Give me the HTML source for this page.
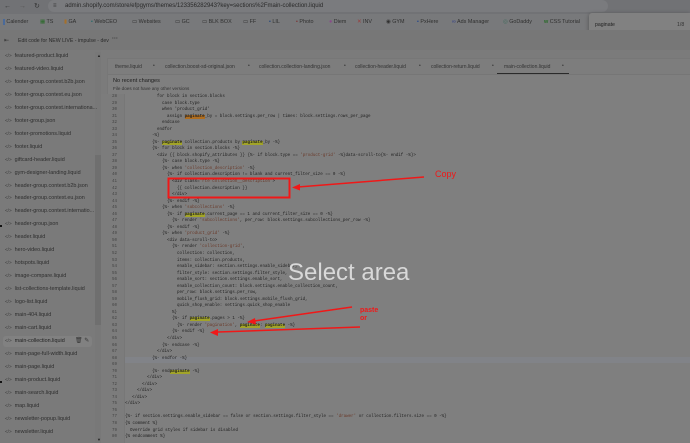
<!DOCTYPE html>
<html><head><meta charset="utf-8"><style>
*{margin:0;padding:0;box-sizing:border-box}
body{width:690px;height:443px;overflow:hidden;background:#7e7e7e;font-family:"Liberation Sans",sans-serif;position:relative;color:#2e2e2e}
.a{position:absolute;white-space:nowrap}
#url{left:0;top:0;width:690px;height:14px;background:#717275}
#bm{left:0;top:14px;width:690px;height:16px;background:#78797b}
#hdr{left:0;top:30px;width:690px;height:20px;background:#777777}
#side{left:0;top:50px;width:101px;height:393px;background:#7a7a7a}
#main{left:101px;top:50px;width:589px;height:393px;background:#7b7b7b}
#panel{left:107px;top:58px;width:583px;height:385px;background:#7f7f7f;border-left:1px solid #777;border-top:1px solid #777}
#tabs{left:108px;top:59px;width:582px;height:16px;background:#7d7d7d;border-bottom:1px solid #767676}
.t{font-size:5px;color:#333;top:64px}
.d{font-size:5px;color:#333;top:63px}
.f{font-size:5.4px;color:#2e2e2e;left:5px}
.f b{font-weight:normal;color:#3a3a3a;margin-right:3px;font-size:4.6px}
#gut{left:101px;top:94px;width:24px;height:349px;background:#7c7c7c;border-right:1px solid #777}
.ln{position:absolute;left:101px;width:16px;text-align:right;font:4.17px "Liberation Mono",monospace;color:#444;height:6.54px;line-height:6.54px}
.cl{position:absolute;font:4.2px "Liberation Mono",monospace;color:#222;white-space:pre;height:6.54px;line-height:6.54px}
.s{color:#6a3a2a}
.h{background:#a2a428;color:#222;font-weight:bold}
.ho{background:#b06e20;color:#222;font-weight:bold}
.bmi{font-size:5.4px;color:#2f2f2f;top:19px}
</style></head><body>
<div class="a" id="url"></div>
<div class="a" style="left:4px;top:3px;font-size:7px;color:#333">&#8592;</div>
<div class="a" style="left:19px;top:3px;font-size:7px;color:#555">&#8594;</div>
<div class="a" style="left:34px;top:2px;font-size:7px;color:#333">&#8635;</div>
<div class="a" style="left:48px;top:0;width:560px;height:12px;border-radius:6px;background:#7a7b7e"></div>
<div class="a" style="left:53px;top:3px;font-size:6px;color:#333">&#8801;</div>
<div class="a" style="left:65px;top:3px;font-size:6px;color:#2a2a2a">admin.shopify.com/store/efpgyms/themes/123356282943?key=sections%2Fmain-collection.liquid</div>
<div class="a" id="bm"></div>
<div class="a bmi" style="left:3px"><span style="background:#4a6a9a;color:#4a6a9a">▪</span> Calender</div>
<div class="a bmi" style="left:40px"><span style="color:#2a6a2a">▦</span> TS</div>
<div class="a bmi" style="left:64px"><span style="color:#a6702a">▮</span> GA</div>
<div class="a bmi" style="left:91px"><span style="color:#2a6a6a">▪</span> WebCEO</div>
<div class="a bmi" style="left:132px">▭ Websites</div>
<div class="a bmi" style="left:175px">▭ GC</div>
<div class="a bmi" style="left:202px">▭ BLK BOX</div>
<div class="a bmi" style="left:243px">▭ FF</div>
<div class="a bmi" style="left:269px"><span style="color:#2a4a7a">▪</span> LIL</div>
<div class="a bmi" style="left:296px"><span style="color:#7a3a3a">▪</span> Photo</div>
<div class="a bmi" style="left:329px"><span style="color:#8a4a8a">●</span> Diem</div>
<div class="a bmi" style="left:357px"><span style="color:#9a3a3a">✕</span> INV</div>
<div class="a bmi" style="left:386px">◉ GYM</div>
<div class="a bmi" style="left:417px"><span style="color:#2a4a8a">▪</span> PxHere</div>
<div class="a bmi" style="left:452px"><span style="color:#2a3a8a">∞</span> Ads Manager</div>
<div class="a bmi" style="left:503px"><span style="color:#3a6a5a">◎</span> GoDaddy</div>
<div class="a bmi" style="left:544px"><span style="color:#2a6a2a;font-weight:bold">w</span> CSS Tutorial</div>
<div class="a" style="left:589px;top:13px;width:101px;height:25px;background:#818181;border-radius:3px 0 0 3px;box-shadow:0 1px 4px rgba(0,0,0,.35)"></div>
<div class="a" style="left:595px;top:22px;font-size:5.2px;color:#222">paginate</div>
<div class="a" style="left:677px;top:22px;font-size:5.2px;color:#333">1/8</div>
<div class="a" id="hdr"></div>
<div class="a" style="left:4px;top:37px;font-size:6px;color:#333">⇤</div>
<div class="a" style="left:18px;top:38px;font-size:5.2px;color:#2a2a2a">Edit code for NEW LIVE - impulse - dev</div>
<div class="a" style="left:112px;top:36px;font-size:6px;color:#333;font-weight:bold">···</div>
<div class="a" id="side"></div>
<div class="a" style="left:95px;top:52px;width:6px;height:391px;background:#787878"></div>
<div class="a" style="left:95px;top:155px;width:6px;height:170px;background:#6f6f6f"></div>
<div class="a" style="left:97px;top:53px;font-size:4px;color:#222">▲</div>
<div class="a" style="left:97px;top:437px;font-size:4px;color:#222">▼</div>
<div class="a" style="left:3px;top:336px;width:89px;height:11px;background:#818181;border-radius:3px"></div>
<div class="a" style="left:75px;top:337px;font-size:6px;color:#333">🗑 ✎</div>
<div class="a" style="left:0;top:225px;width:2px;height:2px;background:#111"></div>
<div class="a" style="left:0;top:381px;width:2px;height:2px;background:#111"></div>
<div class="a f" style="top:53px"><b>&lt;/&gt;</b>featured-product.liquid</div>
<div class="a f" style="top:66px"><b>&lt;/&gt;</b>featured-video.liquid</div>
<div class="a f" style="top:79px"><b>&lt;/&gt;</b>footer-group.context.b2b.json</div>
<div class="a f" style="top:92px"><b>&lt;/&gt;</b>footer-group.context.eu.json</div>
<div class="a f" style="top:105px"><b>&lt;/&gt;</b>footer-group.context.internationa...</div>
<div class="a f" style="top:118px"><b>&lt;/&gt;</b>footer-group.json</div>
<div class="a f" style="top:131px"><b>&lt;/&gt;</b>footer-promotions.liquid</div>
<div class="a f" style="top:144px"><b>&lt;/&gt;</b>footer.liquid</div>
<div class="a f" style="top:157px"><b>&lt;/&gt;</b>giftcard-header.liquid</div>
<div class="a f" style="top:170px"><b>&lt;/&gt;</b>gym-designer-landing.liquid</div>
<div class="a f" style="top:183px"><b>&lt;/&gt;</b>header-group.context.b2b.json</div>
<div class="a f" style="top:195px"><b>&lt;/&gt;</b>header-group.context.eu.json</div>
<div class="a f" style="top:208px"><b>&lt;/&gt;</b>header-group.context.internatio...</div>
<div class="a f" style="top:221px"><b>&lt;/&gt;</b>header-group.json</div>
<div class="a f" style="top:234px"><b>&lt;/&gt;</b>header.liquid</div>
<div class="a f" style="top:247px"><b>&lt;/&gt;</b>hero-video.liquid</div>
<div class="a f" style="top:260px"><b>&lt;/&gt;</b>hotspots.liquid</div>
<div class="a f" style="top:273px"><b>&lt;/&gt;</b>image-compare.liquid</div>
<div class="a f" style="top:286px"><b>&lt;/&gt;</b>list-collections-template.liquid</div>
<div class="a f" style="top:299px"><b>&lt;/&gt;</b>logo-list.liquid</div>
<div class="a f" style="top:312px"><b>&lt;/&gt;</b>main-404.liquid</div>
<div class="a f" style="top:325px"><b>&lt;/&gt;</b>main-cart.liquid</div>
<div class="a f" style="top:338px;color:#222"><b>&lt;/&gt;</b>main-collection.liquid</div>
<div class="a f" style="top:351px"><b>&lt;/&gt;</b>main-page-full-width.liquid</div>
<div class="a f" style="top:364px"><b>&lt;/&gt;</b>main-page.liquid</div>
<div class="a f" style="top:377px"><b>&lt;/&gt;</b>main-product.liquid</div>
<div class="a f" style="top:390px"><b>&lt;/&gt;</b>main-search.liquid</div>
<div class="a f" style="top:403px"><b>&lt;/&gt;</b>map.liquid</div>
<div class="a f" style="top:416px"><b>&lt;/&gt;</b>newsletter-popup.liquid</div>
<div class="a f" style="top:429px"><b>&lt;/&gt;</b>newsletter.liquid</div>
<div class="a" id="main"></div>
<div class="a" id="panel"></div>
<div class="a" id="tabs"></div>
<div class="a t" style="left:115px">theme.liquid</div><div class="a d" style="left:153px">•</div>
<div class="a t" style="left:165px">collection.boost-sd-original.json</div><div class="a d" style="left:248px">•</div>
<div class="a t" style="left:259px">collection.collection-landing.json</div><div class="a d" style="left:344px">•</div>
<div class="a t" style="left:355px">collection-header.liquid</div><div class="a d" style="left:419px">•</div>
<div class="a t" style="left:431px">collection-return.liquid</div><div class="a d" style="left:492px">•</div>
<div class="a t" style="left:504px">main-collection.liquid</div><div class="a d" style="left:562px">•</div>
<div class="a" style="left:497px;top:73px;width:72px;height:1px;background:#2a2a2a"></div>
<div class="a" style="left:113px;top:78px;font-size:5.6px;color:#1e1e1e">No recent changes</div>
<div class="a" style="left:113px;top:86px;font-size:4.6px;color:#333">File does not have any other versions</div>
<div class="a" id="gut"></div>
<div class="a" style="left:125px;top:356.5px;width:565px;height:6.54px;background:#818388"></div>
<div id="code"></div>
<script>
var L=[
[28,157,'for block in section.blocks'],
[29,162,'case block.type'],
[30,162,"when 'product_grid'"],
[31,167,'assign <span class="ho">paginate</span>_by = block.settings.per_row | times: block.settings.rows_per_page'],
[32,162,'endcase'],
[33,157,'endfor'],
[34,152,'-%}'],
[35,152,'{%- <span class="h">paginate</span> collection.products by <span class="h">paginate</span>_by -%}'],
[36,152,'{%- for block in section.blocks -%}'],
[37,157,'&lt;div {{ block.shopify_attributes }} {%- if block.type == <span class="s">\'product-grid\'</span> -%}data-scroll-to{%- endif -%}&gt;'],
[38,162,'{%- case block.type -%}'],
[39,162,'{%- when <span class="s">\'collection_description\'</span> -%}'],
[40,167,'{%- if collection.description != blank and current_filter_size == 0 -%}'],
[41,172,'&lt;div class=<span class="s">"rte collection__description"</span>&gt;'],
[42,177,'{{ collection.description }}'],
[43,172,'&lt;/div&gt;'],
[44,167,'{%- endif -%}'],
[45,162,'{%- when <span class="s">\'subcollections\'</span> -%}'],
[46,167,'{%- if <span class="h">paginate</span>.current_page == 1 and current_filter_size == 0 -%}'],
[47,172,'{%- render <span class="s">\'subcollections\'</span>, per_row: block.settings.subcollections_per_row -%}'],
[48,167,'{%- endif -%}'],
[49,162,'{%- when <span class="s">\'product_grid\'</span> -%}'],
[50,167,'&lt;div data-scroll-to&gt;'],
[51,172,'{%- render <span class="s">\'collection-grid\'</span>,'],
[52,177,'collection: collection,'],
[53,177,'items: collection.products,'],
[54,177,'enable_sidebar: section.settings.enable_sidebar,'],
[55,177,'filter_style: section.settings.filter_style,'],
[56,177,'enable_sort: section.settings.enable_sort,'],
[57,177,'enable_collection_count: block.settings.enable_collection_count,'],
[58,177,'per_row: block.settings.per_row,'],
[59,177,'mobile_flush_grid: block.settings.mobile_flush_grid,'],
[60,177,'quick_shop_enable: settings.quick_shop_enable'],
[61,172,'%}'],
[62,172,'{%- if <span class="h">paginate</span>.pages &gt; 1 -%}'],
[63,177,'{%- render <span class="s">\'pagination\'</span>, <span class="h">paginate</span>: <span class="h">paginate</span> -%}'],
[64,172,'{%- endif -%}'],
[65,167,'&lt;/div&gt;'],
[66,162,'{%- endcase -%}'],
[67,157,'&lt;/div&gt;'],
[68,152,'{%- endfor -%}'],
[69,152,''],
[70,152,'{%- end<span class="h">paginate</span> -%}'],
[71,147,'&lt;/div&gt;'],
[72,142,'&lt;/div&gt;'],
[73,137,'&lt;/div&gt;'],
[74,132,'&lt;/div&gt;'],
[75,125,'&lt;/div&gt;'],
[76,125,''],
[77,125,'{%- if section.settings.enable_sidebar == false or section.settings.filter_style == <span class="s">\'drawer\'</span> or collection.filters.size == 0 -%}'],
[78,125,'{% comment %}'],
[79,130,'Override grid styles if sidebar is disabled'],
[80,125,'{% endcomment %}']];
var h='';
for(var i=0;i<L.length;i++){var y=94+i*6.54;
h+='<div class="ln" style="top:'+y+'px">'+L[i][0]+'</div><div class="cl" style="left:'+L[i][1]+'px;top:'+y+'px">'+L[i][2]+'</div>';}
document.getElementById('code').innerHTML=h;
</script>
<svg class="a" style="left:0;top:0" width="690" height="443">
<rect x="168.5" y="178.5" width="121" height="19" fill="none" stroke="#f01818" stroke-width="2"/>
<g stroke="#f01818" stroke-width="1.5" fill="#f01818">
<line x1="424" y1="177" x2="298" y2="187"/><polygon points="292,187.5 300,184 300,190.5" stroke="none"/>
<line x1="352" y1="307" x2="254" y2="321"/><polygon points="247,322 255,318 256,324.5" stroke="none"/>
<line x1="360" y1="327" x2="218" y2="332"/><polygon points="210,332.5 218,329 218,336" stroke="none"/>
</g></svg>
<div class="a" style="left:435px;top:169px;font-size:9px;color:#f01818">Copy</div>
<div class="a" style="left:360px;top:307px;font-size:7px;color:#f01818;font-weight:bold;line-height:8px">paste<br>or</div>
<div class="a" style="left:288px;top:259px;font-size:24px;color:#d8d8d8">Select area</div>
</body></html>
